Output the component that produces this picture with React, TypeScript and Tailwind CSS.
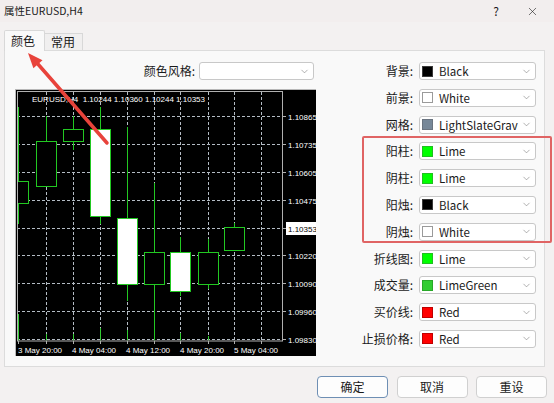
import React from "react";
import { ChevronDown, X } from "lucide-react";

const rows: { label: string; sw: string; name: string }[] = [
  { label: "背景:", sw: "bg-[#000000] border-[#3a3a3a]", name: "Black" },
  { label: "前景:", sw: "bg-[#ffffff] border-[#9a9a9a]", name: "White" },
  { label: "网格:", sw: "bg-[#778899] border-[#6a7480]", name: "LightSlateGrav" },
  { label: "阳柱:", sw: "bg-[#00ff00] border-[#20c020]", name: "Lime" },
  { label: "阴柱:", sw: "bg-[#00ff00] border-[#20c020]", name: "Lime" },
  { label: "阳烛:", sw: "bg-[#000000] border-[#3a3a3a]", name: "Black" },
  { label: "阴烛:", sw: "bg-[#ffffff] border-[#9a9a9a]", name: "White" },
  { label: "折线图:", sw: "bg-[#00ff00] border-[#20c020]", name: "Lime" },
  { label: "成交量:", sw: "bg-[#32cd32] border-[#28a828]", name: "LimeGreen" },
  { label: "买价线:", sw: "bg-[#ff0000] border-[#c00000]", name: "Red" },
  { label: "止损价格:", sw: "bg-[#ff0000] border-[#c00000]", name: "Red" },
];

function ColorSelect({ sw, name }: { sw: string; name: string }) {
  return (
    <div className="w-[117px] h-[18px] bg-white border border-[#c8c8c8] rounded-[3px] flex items-center pl-[2px] pr-[3px]">
      <div className={`w-[11px] h-[11px] border shrink-0 ${sw}`} />
      <span className="ml-[6px] text-[11.5px] leading-[16px] text-[#1a1a1a] whitespace-nowrap">{name}</span>
      <ChevronDown size={11} strokeWidth={1.2} className="ml-auto text-[#707070] shrink-0" />
    </div>
  );
}

const G = "#22c822";
const hGrid = [26, 54, 82, 110, 138, 165, 193, 221, 249];
const prices = ["1.10865", "1.10735", "1.10605", "1.10475", "1.10353", "1.10220", "1.10090", "1.09960", "1.09830"];
const vGrid = [30, 57, 84, 111, 138, 164, 192, 218, 245];
const times: [number, string][] = [
  [2, "3 May 20:00"],
  [56, "4 May 04:00"],
  [110, "4 May 12:00"],
  [164, "4 May 20:00"],
  [218, "5 May 04:00"],
];
const candles = [
  { cx: 2, h: 17, o: 91, c: 113, l: 134, bear: false },
  { cx: 30, h: 26, o: 51, c: 96, l: 96, bear: false },
  { cx: 57, h: 26, o: 39, c: 51, l: 60, bear: false },
  { cx: 84, h: 17, o: 39, c: 126, l: 134, bear: true },
  { cx: 111, h: 37, o: 128, c: 194, l: 211, bear: true },
  { cx: 138, h: 93, o: 162, c: 194, l: 251, bear: false },
  { cx: 164, h: 147, o: 162, c: 201, l: 206, bear: true },
  { cx: 192, h: 149, o: 162, c: 194, l: 199, bear: false },
  { cx: 218, h: 133, o: 137, c: 160, l: 160, bear: false },
];
const vols: [number, number][] = [
  [2, 224],
  [30, 244],
  [57, 244],
  [84, 238],
  [111, 240],
  [164, 243],
  [192, 246],
];

const F = "'Liberation Sans', Arial, sans-serif";

function Chart() {
  return (
    <div className="w-[301px] h-[267px] bg-black border-t border-l border-[#b8b8b8]">
      <svg width="300" height="266" viewBox="0 0 300 266" className="block">
        <defs>
          <clipPath id="plot">
            <rect x="1.5" y="1.5" width="265" height="249" />
          </clipPath>
        </defs>
        {hGrid.map((y) => (
          <line key={"h" + y} x1="1" x2="267" y1={y + 0.5} y2={y + 0.5} stroke="#b4bcc4" strokeDasharray="3 2" strokeWidth="1" />
        ))}
        {vGrid.map((x) => (
          <line key={"v" + x} x1={x + 0.5} x2={x + 0.5} y1="2" y2="251" stroke="#b4bcc4" strokeDasharray="3 2" strokeWidth="1" />
        ))}
        <g clipPath="url(#plot)">
          {vols.map(([x, y]) => (
            <line key={"vol" + x} x1={x + 0.5} x2={x + 0.5} y1={y} y2="251" stroke="#32cd32" strokeWidth="1" />
          ))}
          {candles.map((k) => (
            <g key={"c" + k.cx}>
              <line x1={k.cx + 0.5} x2={k.cx + 0.5} y1={k.h} y2={k.l} stroke={G} strokeWidth="1" />
              <rect
                x={k.cx - 9.5}
                y={k.o + 0.5}
                width="20"
                height={k.c - k.o}
                fill={k.bear ? "#ffffff" : "#000000"}
                stroke={G}
                strokeWidth="1"
              />
            </g>
          ))}
        </g>
        <rect x="1.5" y="1.5" width="265" height="249.5" fill="none" stroke="#b0b0b0" strokeWidth="1" />
        {hGrid.map((y, i) => (
          <g key={"p" + y}>
            <line x1="267" x2="270" y1={y + 0.5} y2={y + 0.5} stroke="#b0b0b0" />
            {i === 4 ? (
              <>
                <rect x="270" y={y - 6} width="30" height="13" fill="#ffffff" />
                <text x="272" y={y + 3.5} fontSize="8" fill="#000" fontFamily={F}>
                  {prices[i]}
                </text>
              </>
            ) : (
              <text x="272" y={y + 3.5} fontSize="8" fill="#fff" fontFamily={F}>
                {prices[i]}
              </text>
            )}
          </g>
        ))}
        {[2, 30, 57, 84, 111, 138, 164, 192, 218, 245].map((x) => (
          <line key={"t" + x} x1={x + 0.5} x2={x + 0.5} y1="251" y2="254" stroke="#b0b0b0" />
        ))}
        {times.map(([x, t]) => (
          <text key={t} x={x} y="263" fontSize="8" fill="#fff" fontFamily={F}>
            {t}
          </text>
        ))}
        <text x="16" y="12" fontSize="8" fill="#fff" fontFamily={F} xmlSpace="preserve">
          EURUSD,H4  1.10244 1.10360 1.10244 1.10353
        </text>
      </svg>
    </div>
  );
}

export default function App() {
  return (
    <div className="relative w-[554px] h-[403px] overflow-hidden bg-[#f3f1f1] text-[#1a1a1a] font-['Noto_Sans_CJK_SC','Noto_Sans',sans-serif]">
      {/* title bar */}
      <div className="h-[22px] flex items-center pl-[4px] bg-[#f2eeee]">
        <span className="text-[10.5px] leading-[14px]">属性EURUSD,H4</span>
        <span className="ml-auto mr-[27px] text-[12px] leading-[14px]">?</span>
        <X size={13} strokeWidth={1.1} className="mr-[15px]" />
      </div>

      {/* tabs */}
      <div className="mt-[8px] ml-[4px] h-[20px] flex items-end">
        <div className="relative z-10 w-[41px] h-[21px] mb-[-1px] bg-[#f9f9f9] border border-b-0 border-[#d8d8d8] rounded-t-[2px] pl-[6px] pt-[2px] text-[12px] leading-[16px]">
          颜色
        </div>
        <div className="w-[38px] h-[17px] bg-[#f0efef] border-t border-r border-[#d8d8d8] pl-[6px] text-[12px] leading-[16px]">
          常用
        </div>
      </div>

      {/* panel */}
      <div className="ml-[4px] w-[541px] h-[317px] bg-[#f9f9f9] border border-[#dcdcdc] flex pl-[10px] pt-[11px]">
        <div className="w-[301px] flex flex-col">
          <div className="h-[18px] flex items-center justify-end gap-[4px] pr-[2px]">
            <span className="text-[12px] leading-[16px]">颜色风格:</span>
            <div className="w-[115px] h-[18px] bg-white border border-[#c8c8c8] rounded-[3px] flex items-center pr-[3px]">
              <ChevronDown size={11} strokeWidth={1.2} className="ml-auto text-[#707070]" />
            </div>
          </div>
          <div className="mt-[9px]">
            <Chart />
          </div>
        </div>
        <div className="flex-1 flex flex-col items-end gap-[8.8px] pr-[8px]">
          {rows.map((r, i) => (
            <div key={i} className="h-[18px] flex items-center gap-[6px]">
              <span className="text-[12px] leading-[16px]">{r.label}</span>
              <ColorSelect sw={r.sw} name={r.name} />
            </div>
          ))}
        </div>
      </div>

      {/* buttons */}
      <div className="mt-[9px] flex justify-end gap-[8.5px] pr-[7px]">
        <button className="w-[71px] h-[22px] bg-[#fdfdfd] border border-[#6e8fb4] rounded-[4px] text-[12px] leading-[16px]">确定</button>
        <button className="w-[71px] h-[22px] bg-[#fdfdfd] border border-[#d0d0d0] rounded-[4px] text-[12px] leading-[16px]">取消</button>
        <button className="w-[71px] h-[22px] bg-[#fdfdfd] border border-[#d0d0d0] rounded-[4px] text-[12px] leading-[16px]">重设</button>
      </div>

      {/* annotations */}
      <div className="absolute left-[362px] top-[136px] w-[190px] h-[107px] border-2 border-[#e06464] rounded-[2px] pointer-events-none" />
      <svg className="absolute left-0 top-0 pointer-events-none" width="554" height="403">
        <line x1="107" y1="143" x2="37" y2="63" stroke="#e8433b" strokeWidth="3.5" strokeLinecap="round" />
        <polygon points="28,53 42.5,60.3 33.4,68.3" fill="#e8433b" />
      </svg>
    </div>
  );
}
